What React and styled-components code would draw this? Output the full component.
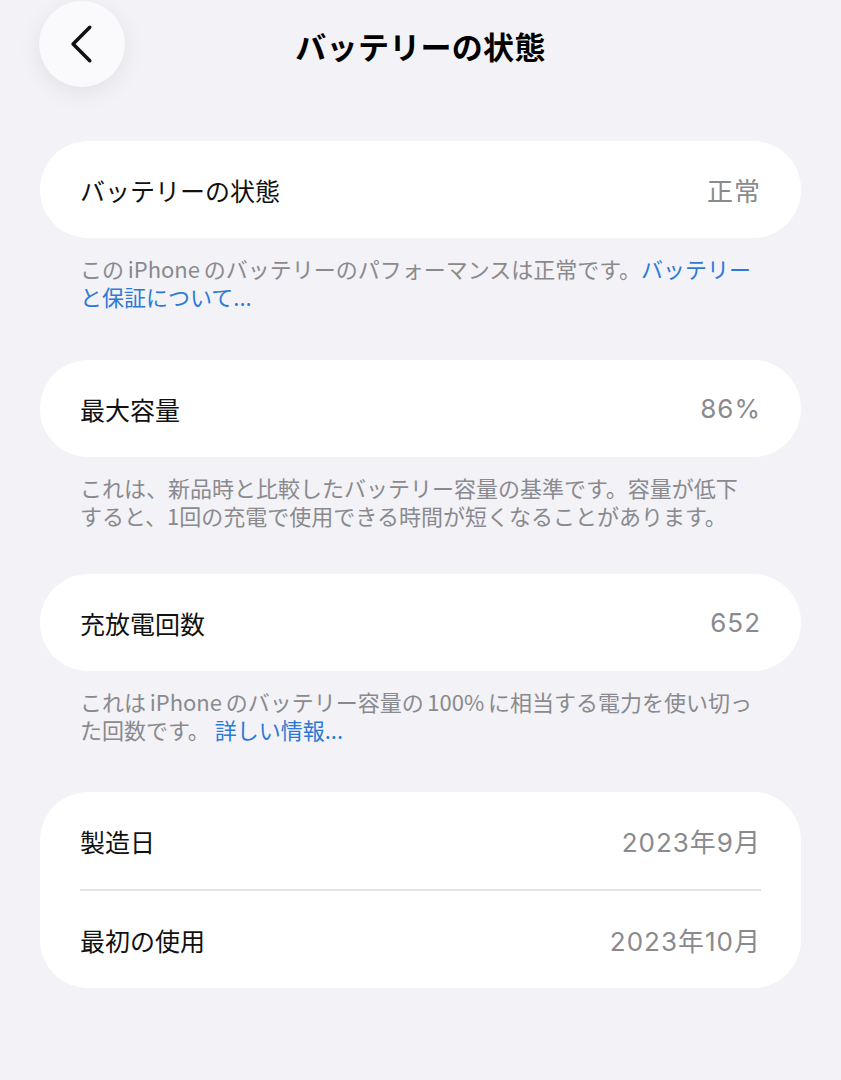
import React from 'react';
import styled, { createGlobalStyle } from 'styled-components';

const GlobalStyle = createGlobalStyle`
  html, body {
    margin: 0;
    padding: 0;
    background: #f2f2f7;
  }
  body {
    font-family: "Noto Sans CJK JP", "Noto Sans", "Liberation Sans", sans-serif;
    color: #000;
  }
`;

const Page = styled.div`
  min-height: 1080px;
  padding: 0 40px;
  box-sizing: border-box;
  background: #f2f2f7;
`;

const Header = styled.header`
  position: relative;
  height: 88px;
  margin-top: 1px;
  display: flex;
  align-items: center;
  justify-content: center;
  margin-bottom: 52px;
`;

const BackButton = styled.button`
  position: absolute;
  left: -1px;
  top: 0;
  width: 86px;
  height: 86px;
  border: none;
  border-radius: 50%;
  background: #fafafc;
  box-shadow: 0 6px 24px rgba(0, 0, 0, 0.07);
  display: flex;
  align-items: center;
  justify-content: center;
  padding: 0;
`;

const Title = styled.h1`
  margin: 0;
  font-size: 31px;
  font-weight: 700;
  letter-spacing: 0.3px;
`;

const Card = styled.div`
  background: #fff;
  border-radius: 48px;
  padding: 0 40px;
`;

const Row = styled.div`
  height: 97px;
  display: flex;
  align-items: center;
  justify-content: space-between;
  font-size: 25px;
  ${(p) => p.$divided && 'border-bottom: 2px solid #e4e4e8;'}
`;

const Label = styled.span`
  color: #111;
`;

const Value = styled.span`
  font-family: Inter, "Noto Sans CJK JP", sans-serif;
  font-size: 26px;
  letter-spacing: 1px;
  color: #8a8a8e;
`;

const Footnote = styled.p`
  margin: 0 0 ${(p) => p.$gap || 48}px;
  padding: 16px 40px 0;
  font-size: 22px;
  line-height: 28px;
  color: #8a8a8e;
  white-space: nowrap;
`;

const Link = styled.span`
  color: #2b7ad8;
`;

const Chevron = () => (
  <svg width="30" height="40" viewBox="70 26 20 36" fill="none">
    <path d="M87 29 L72 44 L87 59" stroke="#111" strokeWidth="3.2" strokeLinecap="round" strokeLinejoin="round" />
  </svg>
);

export default function App() {
  return (
    <Page>
      <GlobalStyle />
      <Header>
        <BackButton aria-label="戻る">
          <Chevron />
        </BackButton>
        <Title>バッテリーの状態</Title>
      </Header>

      <Card>
        <Row>
          <Label>バッテリーの状態</Label>
          <Value>正常</Value>
        </Row>
      </Card>
      <Footnote $gap={50}>
        この{'\u2006'}iPhone{'\u2006'}のバッテリーのパフォーマンスは正常です。<Link>バッテリー</Link>
        <br />
        <Link>と保証について...</Link>
      </Footnote>

      <Card>
        <Row>
          <Label>最大容量</Label>
          <Value>86%</Value>
        </Row>
      </Card>
      <Footnote $gap={45}>
        これは、新品時と比較したバッテリー容量の基準です。容量が低下
        <br />
        すると、1回の充電で使用できる時間が短くなることがあります。
      </Footnote>

      <Card>
        <Row>
          <Label>充放電回数</Label>
          <Value>652</Value>
        </Row>
      </Card>
      <Footnote $gap={49}>
        これは{'\u2006'}iPhone{'\u2006'}のバッテリー容量の{'\u2006'}100%{'\u2006'}に相当する電力を使い切っ
        <br />
        た回数です。 <Link>詳しい情報...</Link>
      </Footnote>

      <Card>
        <Row $divided>
          <Label>製造日</Label>
          <Value>2023年9月</Value>
        </Row>
        <Row>
          <Label>最初の使用</Label>
          <Value>2023年10月</Value>
        </Row>
      </Card>
    </Page>
  );
}
